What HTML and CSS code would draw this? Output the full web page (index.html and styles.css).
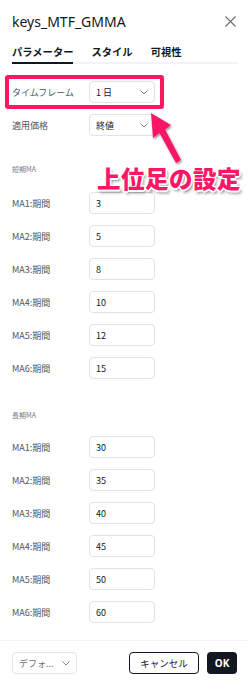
FILE: index.html
```html
<!DOCTYPE html>
<html lang="ja">
<head>
<meta charset="utf-8">
<link rel="stylesheet" href="styles.css">
</head>
<body>
<div class="dialog">
  <div class="header">
    <div class="title">keys_MTF_GMMA</div>
    <svg class="close" width="11" height="11" viewBox="0 0 11 11"><path d="M0.5 0.5L10.5 10.5M10.5 0.5L0.5 10.5" stroke="#6a6d78" stroke-width="1.1" fill="none"/></svg>
  </div>
  <div class="tabs">
    <div class="tab active">パラメーター</div>
    <div class="tab">スタイル</div>
    <div class="tab">可視性</div>
  </div>
  <div class="form">
    <div class="row"><div class="label">タイムフレーム</div><div class="field select"><span>1&nbsp;日</span><svg class="chev" width="8" height="5" viewBox="0 0 8 5"><path d="M0.5 0.5L4 4L7.5 0.5" stroke="#80838e" fill="none"/></svg></div></div>
    <div class="row"><div class="label">適用価格</div><div class="field select"><span>終値</span><svg class="chev" width="8" height="5" viewBox="0 0 8 5"><path d="M0.5 0.5L4 4L7.5 0.5" stroke="#80838e" fill="none"/></svg></div></div>
    <div class="section first">短期MA</div>
    <div class="row"><div class="label">MA1:期間</div><div class="field">3</div></div>
    <div class="row"><div class="label">MA2:期間</div><div class="field">5</div></div>
    <div class="row"><div class="label">MA3:期間</div><div class="field">8</div></div>
    <div class="row"><div class="label">MA4:期間</div><div class="field">10</div></div>
    <div class="row"><div class="label">MA5:期間</div><div class="field">12</div></div>
    <div class="row"><div class="label">MA6:期間</div><div class="field">15</div></div>
    <div class="section second">長期MA</div>
    <div class="row"><div class="label">MA1:期間</div><div class="field">30</div></div>
    <div class="row"><div class="label">MA2:期間</div><div class="field">35</div></div>
    <div class="row"><div class="label">MA3:期間</div><div class="field">40</div></div>
    <div class="row"><div class="label">MA4:期間</div><div class="field">45</div></div>
    <div class="row"><div class="label">MA5:期間</div><div class="field">50</div></div>
    <div class="row"><div class="label">MA6:期間</div><div class="field">60</div></div>
  </div>
  <div class="footer">
    <div class="field select defaults"><span>デフォ...</span><svg class="chev" width="8" height="5" viewBox="0 0 8 5"><path d="M0.5 0.5L4 4L7.5 0.5" stroke="#80838e" fill="none"/></svg></div>
    <div class="spacer"></div>
    <div class="btn cancel">キャンセル</div>
    <div class="btn ok">OK</div>
  </div>

  <div class="highlight"></div>
  <svg class="arrow" width="248" height="200" viewBox="0 0 248 200">
    <defs>
      <filter id="sh" x="-30%" y="-30%" width="160%" height="160%">
        <feDropShadow dx="1" dy="1.5" stdDeviation="1.2" flood-color="#000" flood-opacity="0.45"/>
      </filter>
    </defs>
    <polygon filter="url(#sh)" fill="#fa1766" points="151,113 171,125 165,129.5 181,160 176,163 159.5,133 153,138"/>
  </svg>
  <div class="note">上位足の設定</div>
</div>
</body>
</html>
```
FILE: styles.css
```css
* { box-sizing: border-box; }
html, body { margin: 0; padding: 0; background: #fff; }
body {
  font-family: "Noto Sans", "Noto Sans CJK JP", sans-serif;
  color: #131722;
}
.dialog {
  position: relative;
  width: 248px;
  height: 681px;
  overflow: hidden;
  background: #fff;
}
.header {
  display: flex;
  align-items: center;
  justify-content: space-between;
  height: 42px;
  padding: 1px 12px 0 12px;
}
.title {
  font-size: 14px;
  line-height: 20px;
  color: #131722;
}
.tabs {
  display: flex;
  gap: 18px;
  margin: 0 10px 0 12px;
  border-bottom: 2px solid #f0f3fa;
  height: 22px;
}
.tab {
  font-family: "Noto Sans CJK JP", sans-serif;
  font-size: 10.3px;
  font-weight: 700;
  line-height: 20px;
  height: 22px;
  color: #131722;
}
.tab.active {
  border-bottom: 2px solid #131722;
}
.form {
  display: flex;
  flex-direction: column;
  gap: 11px;
  padding: 17px 0 0 12px;
  height: 576px;
}
.row {
  display: flex;
  align-items: center;
  height: 22px;
}
.label {
  width: 77px;
  font-family: "Noto Sans CJK JP", sans-serif;
  font-size: 9px;
  color: #50535e;
}
.field {
  width: 66px;
  height: 22px;
  border: 1px solid #e0e3eb;
  border-radius: 4px;
  display: flex;
  align-items: center;
  padding-left: 6px;
  font-family: "Noto Sans CJK JP", sans-serif;
  font-size: 9px;
  color: #131722;
}
.select { justify-content: space-between; padding-right: 6px; }
.section {
  font-family: "Noto Sans CJK JP", sans-serif;
  font-size: 7px;
  line-height: 10px;
  height: 10px;
  color: #787b86;
}
.section.first { margin: 17px 0 7px 0; }
.section.second { margin: 20px 0 5px 0; }
.footer {
  border-top: 1px solid #f0f3fa;
  display: flex;
  align-items: center;
  padding: 11px 11px 0 12px;
  gap: 8px;
}
.defaults {
  width: 65px;
  color: #6a6d78;
}
.spacer { flex: 1; }
.btn {
  height: 22px;
  border-radius: 4px;
  display: flex;
  align-items: center;
  justify-content: center;
  font-family: "Noto Sans CJK JP", sans-serif;
  font-size: 9.5px;
}
.cancel {
  width: 70px;
  border: 1px solid #131722;
  color: #131722;
}
.ok {
  width: 30px;
  background: #131722;
  color: #fff;
  font-weight: 700;
  font-family: "Noto Sans", sans-serif;
  font-size: 10px;
}
.highlight {
  position: absolute;
  left: 5px;
  top: 75px;
  width: 159px;
  height: 34px;
  border: 4px solid #fb1a62;
  border-radius: 3px;
}
.arrow {
  position: absolute;
  left: 0;
  top: 0;
}
.note {
  position: absolute;
  left: 97px;
  top: 163px;
  font-family: "Noto Sans CJK JP", sans-serif;
  font-weight: 900;
  font-size: 23.5px;
  line-height: 30px;
  letter-spacing: 0.5px;
  color: #fa1766;
  text-shadow:
    -1.5px 0 0 #fff, 1.5px 0 0 #fff, 0 -1.5px 0 #fff, 0 1.5px 0 #fff,
    -1px -1px 0 #fff, 1px 1px 0 #fff, -1px 1px 0 #fff, 1px -1px 0 #fff,
    2px 3px 3px rgba(0,0,0,0.45);
}
```
